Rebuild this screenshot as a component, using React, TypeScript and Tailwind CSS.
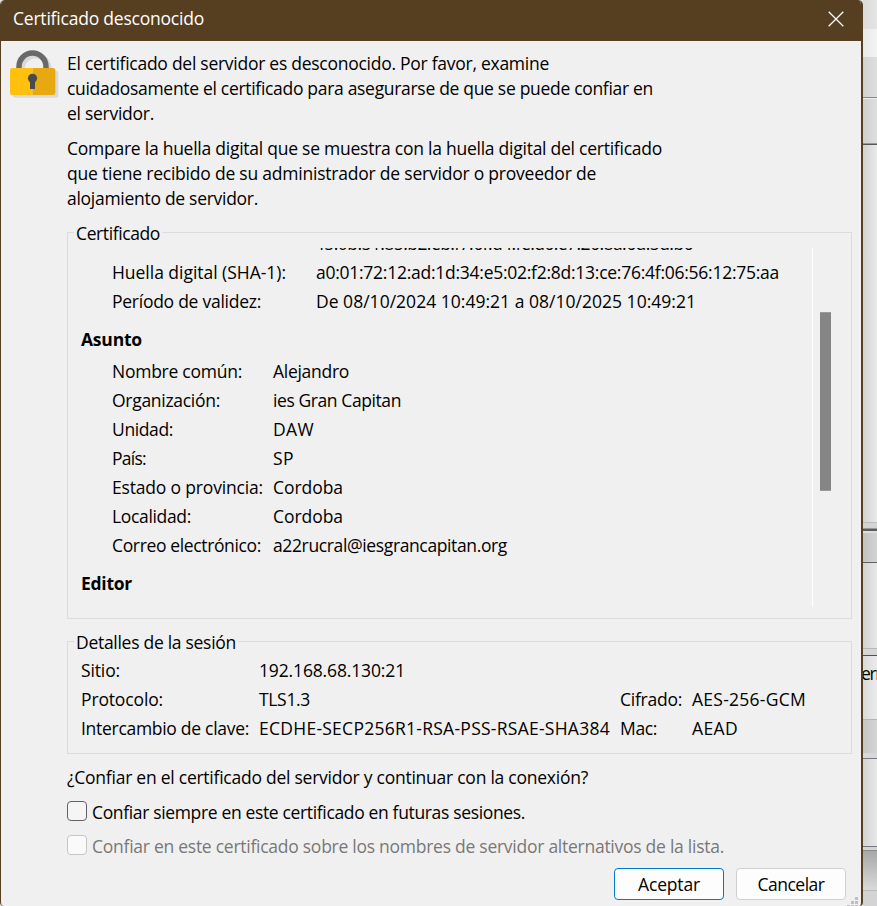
import { useLayoutEffect, useRef, useState } from 'react';

/** Single line of text whose tracking is computed so that it fills `w` pixels. */
function T({ w, children }: { w: number; children: string }) {
  const ref = useRef<HTMLSpanElement>(null);
  const [ls, setLs] = useState(0);
  useLayoutEffect(() => {
    const el = ref.current;
    if (el) setLs((w - el.getBoundingClientRect().width) / children.length);
  }, []);
  return (
    <span ref={ref} style={{ letterSpacing: ls }} className="inline-block self-start justify-self-start whitespace-nowrap">
      {children}
    </span>
  );
}

type Row = [string, number, string, number];

const fingerprints: Row[] = [
  ['Huella digital (SHA-1):', 174, 'a0:01:72:12:ad:1d:34:e5:02:f2:8d:13:ce:76:4f:06:56:12:75:aa', 463],
  ['Período de validez:', 149, 'De 08/10/2024 10:49:21 a 08/10/2025 10:49:21', 380],
];

const subject: Row[] = [
  ['Nombre común:', 130, 'Alejandro', 76],
  ['Organización:', 108, 'ies Gran Capitan', 128],
  ['Unidad:', 61, 'DAW', 41],
  ['País:', 34, 'SP', 21],
  ['Estado o provincia:', 151, 'Cordoba', 70],
  ['Localidad:', 79, 'Cordoba', 70],
  ['Correo electrónico:', 149, 'a22rucral@iesgrancapitan.org', 234],
];

function Group({ title, w, className, children }: { title: string; w: number; className: string; children: React.ReactNode }) {
  return (
    <section className={`relative border border-[#dcdcdc] ${className}`}>
      <h2 className="absolute -top-[12px] left-[6px] bg-[#f0f0f0] pl-[2px] pr-[2px] leading-[25px]">
        <T w={w}>{title}</T>
      </h2>
      {children}
    </section>
  );
}

function Lock() {
  return (
    <svg className="ml-[9px] mt-[8px] h-[50px] w-[50px]" viewBox="0 0 50 50">
      <g transform="translate(3 2.700)" fill="#d9d9d9">
        <path d="M9 22v-4.500a13.500 13.500 0 0 1 27 0V22" fill="none" stroke="#d9d9d9" strokeWidth="5.500" />
        <rect y="19" width="45.300" height="27" rx="2.500" />
      </g>
      <path d="M9 21v-3.500a13.500 13.500 0 0 1 27 0V21" fill="none" stroke="#696969" strokeWidth="5.500" />
      <path d="M2.500 19h20.200v27H2.500A2.500 2.500 0 0 1 0 43.500v-22A2.500 2.500 0 0 1 2.500 19z" fill="#ffc10e" />
      <path d="M22.700 19h20.100a2.500 2.500 0 0 1 2.500 2.500v22a2.500 2.500 0 0 1-2.500 2.500H22.700z" fill="#e6a910" />
      <circle cx="22.500" cy="29.300" r="4.600" fill="#4a4a4a" />
      <rect x="20" y="30" width="5" height="10" fill="#4a4a4a" />
    </svg>
  );
}

function Backdrop() {
  return (
    <div className="flex w-[14px] flex-col overflow-hidden bg-linear-to-r from-[#d0d0d0] to-[#ededed]">
      <div className="h-[29px] bg-linear-to-r from-[#dcdcdc] to-[#e4e4e4]" />
      <div className="h-[28px] bg-linear-to-r from-[#e9e9e9] to-[#f3f3f3]" />
      <div className="h-[40px] bg-linear-to-r from-[#d2d2d2] to-[#dedede]" />
      <div className="h-[2px] border-t border-[#888888] bg-[#eeeeee]" />
      <div className="h-[44px] bg-linear-to-r from-[#d0d0d0] to-[#dedede]" />
      <div className="h-[2px] border-b border-[#555555] bg-[#999999]" />
      <div className="h-[378px] bg-linear-to-r from-[#d2d2d2] to-[#eaeaea]" />
      <div className="h-[6px] border-t border-[#bdbdbd] bg-[#d4d4d4]" />
      <div className="h-[3px] border-t border-[#999999] bg-[#5c5c5c]" />
      <div className="h-[31px] border-t-2 border-[#dedede] bg-linear-to-r from-[#c2c2c2] to-[#d3d3d3]" />
      <div className="h-[1px] bg-[#606060]" />
      <div className="h-[85px] bg-linear-to-r from-[#d2d2d2] to-[#e8e8e8]" />
      <div className="h-[7px] border-t border-[#b8b8b8] bg-[#d6d6d6]" />
      <div className="h-[1px] bg-[#505055]" />
      <div className="h-[63px] overflow-hidden whitespace-nowrap bg-linear-to-r from-[#dadada] to-[#ebebeb] pt-[5px] leading-[25px]">
        <span className="-ml-[2px]">
          <T w={20}>err</T>
        </span>
      </div>
      <div className="h-[34px] border-t border-[#b5b5b5] bg-linear-to-r from-[#c6c6c6] to-[#d4d4d4]" />
      <div className="h-[5px] bg-[#d8d8dc]" />
      <div className="h-[1px] bg-[#777780]" />
      <div className="h-[87px] bg-linear-to-r from-[#d4d4d4] to-[#e8e8e8]" />
      <div className="h-[1px] bg-[#777780]" />
      <div className="h-[4px] border-b border-[#8a8a8a] bg-[#d4d4d4]" />
      <div className="h-[39px] bg-linear-to-b from-[#a8a8a8] to-[#dadada]" />
      <div className="h-[16px] border-t border-[#bbbbbb] bg-[#d4d4d4]" />
    </div>
  );
}

export default function App() {
  return (
    <main className="flex h-[906px] w-[877px] overflow-hidden bg-[#e2e2e2] font-['Open_Sans','Noto_Sans',sans-serif] text-[17.5px] text-black">
      <div className="flex w-[863px] flex-col overflow-hidden rounded-t-[5px] rounded-b-[4px] border-l border-r-2 border-[#563e20] bg-[#f0f0f0]">
        <header className="flex h-[41px] shrink-0 items-center justify-between bg-[#563e20] pb-[4px] pl-[12px] pr-[17px] text-white">
          <h1 className="leading-[25px]"><T w={191}>Certificado desconocido</T></h1>
          <svg className="h-[16px] w-[16px]" viewBox="0 0 16 16" fill="none" stroke="#fff" strokeWidth="1.300">
            <path d="M.7.700 15.300 15.300M15.300.700.700 15.300" />
          </svg>
        </header>
        <div className="flex shrink-0">
          <div className="w-[66px]">
            <Lock />
          </div>
          <div className="flex w-[785px] flex-col">
            <div className="flex flex-col pt-[10px] leading-[25px]">
              <T w={482}>El certificado del servidor es desconocido. Por favor, examine</T>
              <T w={586}>cuidadosamente el certificado para asegurarse de que se puede confiar en</T>
              <T w={87}>el servidor.</T>
              <div className="h-[10px]" />
              <T w={595}>Compare la huella digital que se muestra con la huella digital del certificado</T>
              <T w={529}>que tiene recibido de su administrador de servidor o proveedor de</T>
              <T w={191}>alojamiento de servidor.</T>
            </div>
            <Group title="Certificado" w={84} className="mt-[21px] h-[387px]">
              <div className="mt-[15px] flex h-[359px]">
                <div className="w-[745px] overflow-hidden border-r border-white leading-[29px]">
                  <div className="-mt-[19px] pl-[251px]">
                    <T w={374}>f5:0b:51:85:b2:eb:f7:6f:d4:fe:d6:e7:26:8a:6d:5d:b6</T>
                  </div>
                  {fingerprints.map(([k, kw, v, vw]) => (
                    <div key={k} className="flex h-[29px] pl-[44px]">
                      <div className="w-[204px]"><T w={kw}>{k}</T></div>
                      <T w={vw}>{v}</T>
                    </div>
                  ))}
                  <h3 className="mt-[9px] h-[32px] pl-[13px] font-bold"><T w={61}>Asunto</T></h3>
                  {subject.map(([k, kw, v, vw]) => (
                    <div key={k + v} className="flex h-[29px] pl-[44px]">
                      <div className="w-[161px]"><T w={kw}>{k}</T></div>
                      <T w={vw}>{v}</T>
                    </div>
                  ))}
                  <h3 className="mt-[9px] pl-[13px] font-bold"><T w={51}>Editor</T></h3>
                </div>
                <div className="ml-[7px] mt-[64px] h-[179px] w-[11px] border-y border-[#9a9a9a] bg-[#858585]" />
              </div>
            </Group>
            <Group title="Detalles de la sesión" w={160} className="mt-[22px] h-[113px]">
              <div className="mt-[14px] grid grid-cols-[178px_361px_72px_auto] pl-[13px] leading-[29px]">
                <T w={39}>Sitio:</T>
                <div className="col-span-3"><T w={146}>192.168.68.130:21</T></div>
                <T w={82}>Protocolo:</T>
                <T w={51}>TLS1.3</T>
                <T w={62}>Cifrado:</T>
                <T w={114}>AES-256-GCM</T>
                <T w={168}>Intercambio de clave:</T>
                <T w={351}>ECDHE-SECP256R1-RSA-PSS-RSAE-SHA384</T>
                <T w={37}>Mac:</T>
                <T w={46}>AEAD</T>
              </div>
            </Group>
            <p className="mt-[11px] leading-[25px]"><T w={521}>¿Confiar en el certificado del servidor y continuar con la conexión?</T></p>
            <label className="mt-[6px] flex h-[30px] items-center">
              <span className="h-[20px] w-[20px] rounded-[4px] border border-[#626262] bg-[#f5f5f5]" />
              <span className="ml-[5px] mt-[2px] leading-[25px]"><T w={433}>Confiar siempre en este certificado en futuras sesiones.</T></span>
            </label>
            <label className="mt-[4px] flex h-[30px] items-center text-[#787878]">
              <span className="h-[20px] w-[20px] rounded-[4px] border border-[#c5c5c5] bg-[#fafafa]" />
              <span className="ml-[5px] mt-[2px] leading-[25px]"><T w={632}>Confiar en este certificado sobre los nombres de servidor alternativos de la lista.</T></span>
            </label>
            <div className="mt-[8px] flex justify-end gap-[12px] pr-[6px]">
              <button className="h-[32px] w-[110px] rounded-[4px] border border-[#0078d4] bg-[#fdfdfd]"><T w={62}>Aceptar</T></button>
              <button className="h-[32px] w-[110px] rounded-[4px] border border-[#d0d0d0] bg-[#fdfdfd]"><T w={67}>Cancelar</T></button>
            </div>
          </div>
        </div>
        <svg className="-mt-[3px] ml-[846px] h-[12px] w-[11px] shrink-0" viewBox="0 0 11 12" fill="#bfbfbf">
          <path d="M8 0h3v3H8zM4 4h3v3H4zM8 4h3v3H8zM0 8h3v3H0zM4 8h3v3H4zM8 8h3v3H8z" />
        </svg>
      </div>
      <Backdrop />
    </main>
  );
}
